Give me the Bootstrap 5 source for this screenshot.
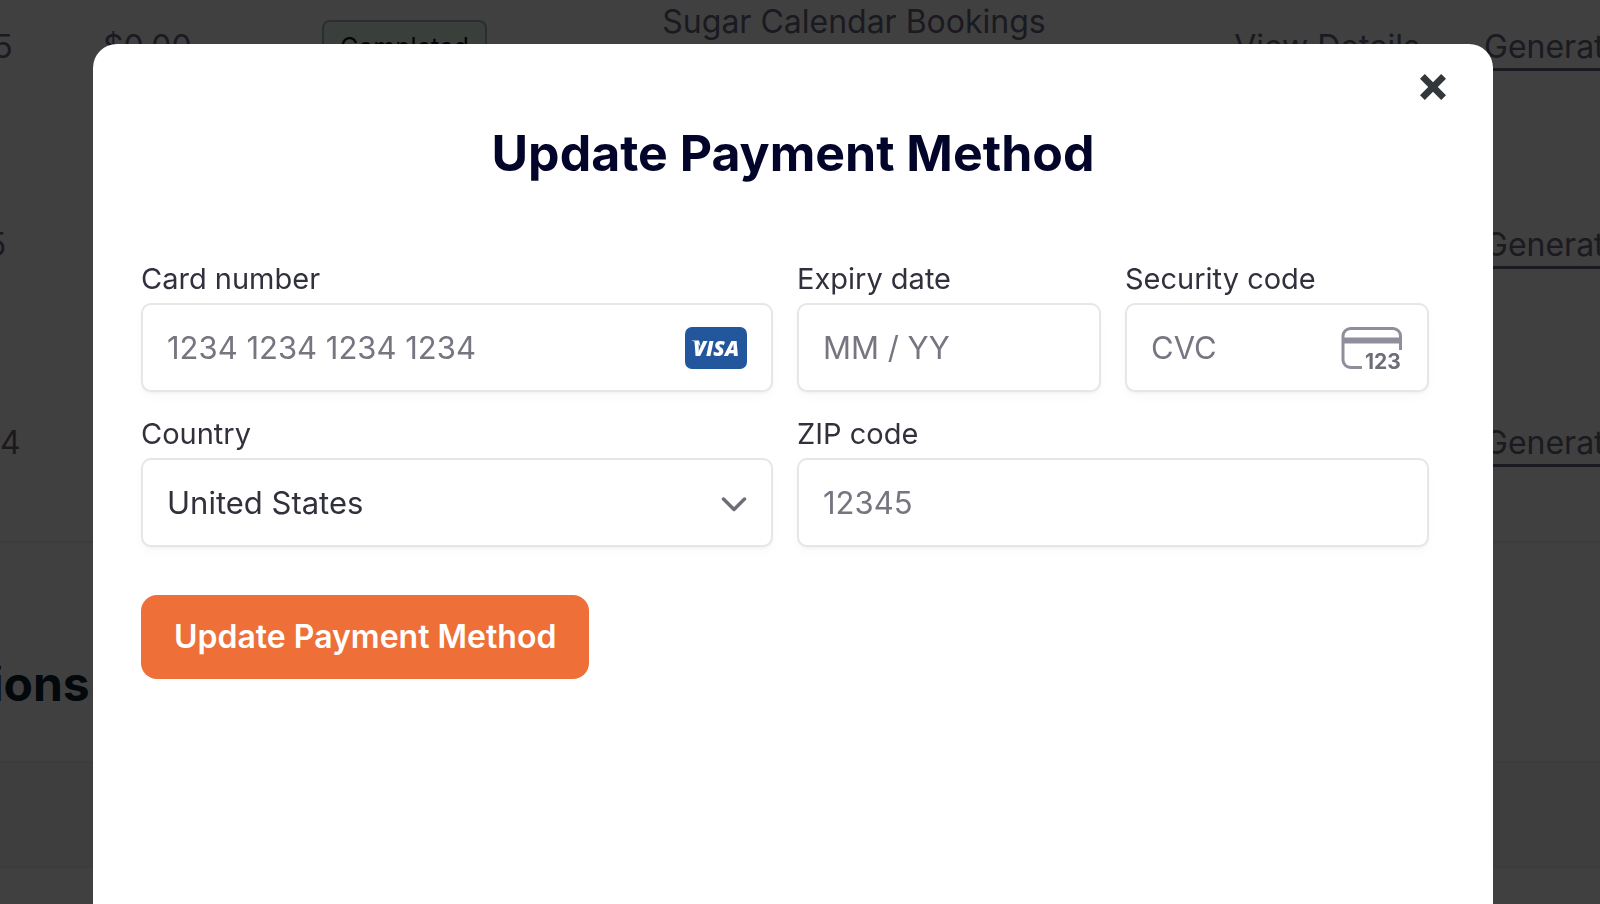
<!DOCTYPE html>
<html lang="en">
<head>
<meta charset="utf-8">
<meta name="viewport" content="width=device-width, initial-scale=1">
<title>Update Payment Method</title>
<link href="https://cdn.jsdelivr.net/npm/bootstrap@5.3.0/dist/css/bootstrap.min.css" rel="stylesheet">
<style>
  body { font-family: Inter, "Liberation Sans", sans-serif; color: #30313d; overflow: hidden; }

  /* account page behind the dialog */
  .account { height: 100vh; overflow: hidden; color: #6c6880; font-size: 32px; line-height: 50px; }
  .orders { margin: -52px 0 0 -190px; width: 2100px; table-layout: fixed; border-bottom: 2px solid #f0f0f0; }
  .orders td { height: 198px; padding: 0; vertical-align: middle; white-space: nowrap; }
  .account-link { color: #6c6880; text-decoration: none; border-bottom: 3px solid #6c6880; padding-bottom: 2px; }
  .status { display: inline-block; border: 2px solid #a8b8c4; border-radius: 8px; background: #ecfaf0; color: #081420; font-size: 25px; line-height: 50px; padding: 0 16px; }
  .section-title { margin: 112px 0 48px -237px; font-size: 48px; line-height: 58px; font-weight: 700; color: #0c2030; }
  .list-head { height: 107px; background: #f8f8f8; border: solid #f0f0f0; border-width: 2px 0; }

  /* dialog */
  .modal-backdrop { --bs-backdrop-opacity: .75; }
  .pay-dialog { max-width: none; margin: 44px 107px 0 93px; }
  .pay-content { min-height: calc(100vh - 44px); border: 0; border-radius: 24px 24px 0 0; padding: 24px 64px 0 48px; }
  .close-x { width: 40px; height: 38px; margin-right: -24px; color: #32373c; }
  .pay-title { margin: 15px -16px 74px 0; font-size: 50px; line-height: 64px; font-weight: 700; color: #03042a; }
  .pay-fields { --bs-gutter-x: 24px; --bs-gutter-y: 22px; }
  .pay-label { margin-bottom: 4px; font-size: 29px; line-height: 40px; }
  .pay-field { height: 89px; padding: 0 24px; font-size: 31px; line-height: 48px; color: #30313d; border: 2px solid #e6e6e6; border-radius: 10px; box-shadow: 0 2px 2px rgba(0,0,0,.03), 0 6px 12px rgba(0,0,0,.02); }
  .pay-field::placeholder { color: #757680; opacity: 1; }
  select.pay-field { background-image: none; }
  .field-icon { pointer-events: none; right: 26px; }
  .pay-btn { margin-top: 48px; padding: 18px 33px; border: 0; border-radius: 16px; background: #ee6f38; color: #fff; font-size: 32px; line-height: 48px; font-weight: 600; }
  .pay-btn:hover { background: #dc602a; color: #fff; }
</style>
</head>
<body>
<main class="account" aria-hidden="true">
  <table class="orders">
    <colgroup>
      <col style="width:293px"><col style="width:219px"><col style="width:318px"><col style="width:428px"><col style="width:352px"><col>
    </colgroup>
    <tbody>
      <tr>
        <td>May 12, 2025</td><td>$0.00</td><td><span class="status">Completed</span></td>
        <td class="text-center">Sugar Calendar Bookings<br>&nbsp;</td>
        <td class="text-end"><a class="account-link" href="#">View Details</a></td>
        <td class="ps-5"><a class="account-link ms-3" href="#">Generate</a></td>
      </tr>
      <tr>
        <td>May 11, 2025</td><td></td><td></td><td></td><td></td>
        <td class="ps-5"><a class="account-link ms-3" href="#">Generate</a></td>
      </tr>
      <tr>
        <td>May 04, 2024</td><td></td><td></td><td></td><td></td>
        <td class="ps-5"><a class="account-link ms-3" href="#">Generate</a></td>
      </tr>
    </tbody>
  </table>
  <h2 class="section-title">Subscriptions</h2>
  <div class="list-head"></div>
</main>

<div class="modal-backdrop show"></div>
<div class="modal d-block overflow-hidden" role="dialog" aria-modal="true" aria-labelledby="payTitle">
  <div class="modal-dialog pay-dialog">
    <div class="modal-content pay-content">
      <div class="d-flex justify-content-end">
        <button type="button" class="btn p-0 border-0 close-x d-flex align-items-center justify-content-center" aria-label="Close">
          <svg width="28" height="28" viewBox="0 0 28 28" aria-hidden="true"><path d="M5.800 1 14 9.200 22.200 1 27 5.800 18.800 14 27 22.200 22.200 27 14 18.800 5.800 27 1 22.200 9.200 14 1 5.800Z" fill="currentColor"/></svg>
        </button>
      </div>
      <h1 class="pay-title text-center" id="payTitle">Update Payment Method</h1>
      <form>
        <div class="row pay-fields">
          <div class="col-6">
            <label class="d-block pay-label" for="card">Card number</label>
            <div class="position-relative d-flex align-items-center">
              <input class="form-control pay-field" id="card" type="text" inputmode="numeric" placeholder="1234 1234 1234 1234">
              <svg class="field-icon position-absolute" width="62" height="42" viewBox="0 0 62 42" aria-hidden="true">
                <rect width="62" height="42" rx="7" fill="#22579d"/>
                <path d="M6 13.500h8l1.500 6C13.500 16 10 14.500 6 13.500Z" fill="#fff"/>
                <text x="8" y="28.500" font-family="Open Sans, sans-serif" font-size="21" font-weight="800" font-style="italic" fill="#fff">VISA</text>
              </svg>
            </div>
          </div>
          <div class="col-3">
            <label class="d-block pay-label" for="expiry">Expiry date</label>
            <input class="form-control pay-field" id="expiry" type="text" placeholder="MM / YY">
          </div>
          <div class="col-3">
            <label class="d-block pay-label" for="cvc">Security code</label>
            <div class="position-relative d-flex align-items-center">
              <input class="form-control pay-field" id="cvc" type="text" placeholder="CVC">
              <svg class="field-icon position-absolute" width="62" height="42" viewBox="0 0 62 42" aria-hidden="true">
                <path d="M59.500 23V9a7.500 7.500 0 0 0-7.500-7.500H9.500A7.500 7.500 0 0 0 2 9v24a7.500 7.500 0 0 0 7.500 7.500H21" fill="none" stroke="#8f8f9c" stroke-width="3"/>
                <path d="M2 10.500h58v6H2Z" fill="#8f8f9c"/>
                <text x="24" y="42" font-family="Inter, sans-serif" font-size="21" font-weight="700" fill="#6d6e78">123</text>
              </svg>
            </div>
          </div>
          <div class="col-6">
            <label class="d-block pay-label" for="country">Country</label>
            <div class="position-relative d-flex align-items-center">
              <select class="form-select pay-field" id="country"><option>United States</option></select>
              <svg class="field-icon position-absolute" width="26" height="18" viewBox="0 0 26 18" aria-hidden="true"><path d="M2.500 5 13 15.500 23.500 5" fill="none" stroke="#6d6e78" stroke-width="3.500" stroke-linecap="round" stroke-linejoin="round"/></svg>
            </div>
          </div>
          <div class="col-6">
            <label class="d-block pay-label" for="zip">ZIP code</label>
            <input class="form-control pay-field" id="zip" type="text" inputmode="numeric" placeholder="12345">
          </div>
        </div>
        <button type="submit" class="btn pay-btn">Update Payment Method</button>
      </form>
    </div>
  </div>
</div>
<script src="https://cdn.jsdelivr.net/npm/bootstrap@5.3.0/dist/js/bootstrap.bundle.min.js"></script>
</body>
</html>
